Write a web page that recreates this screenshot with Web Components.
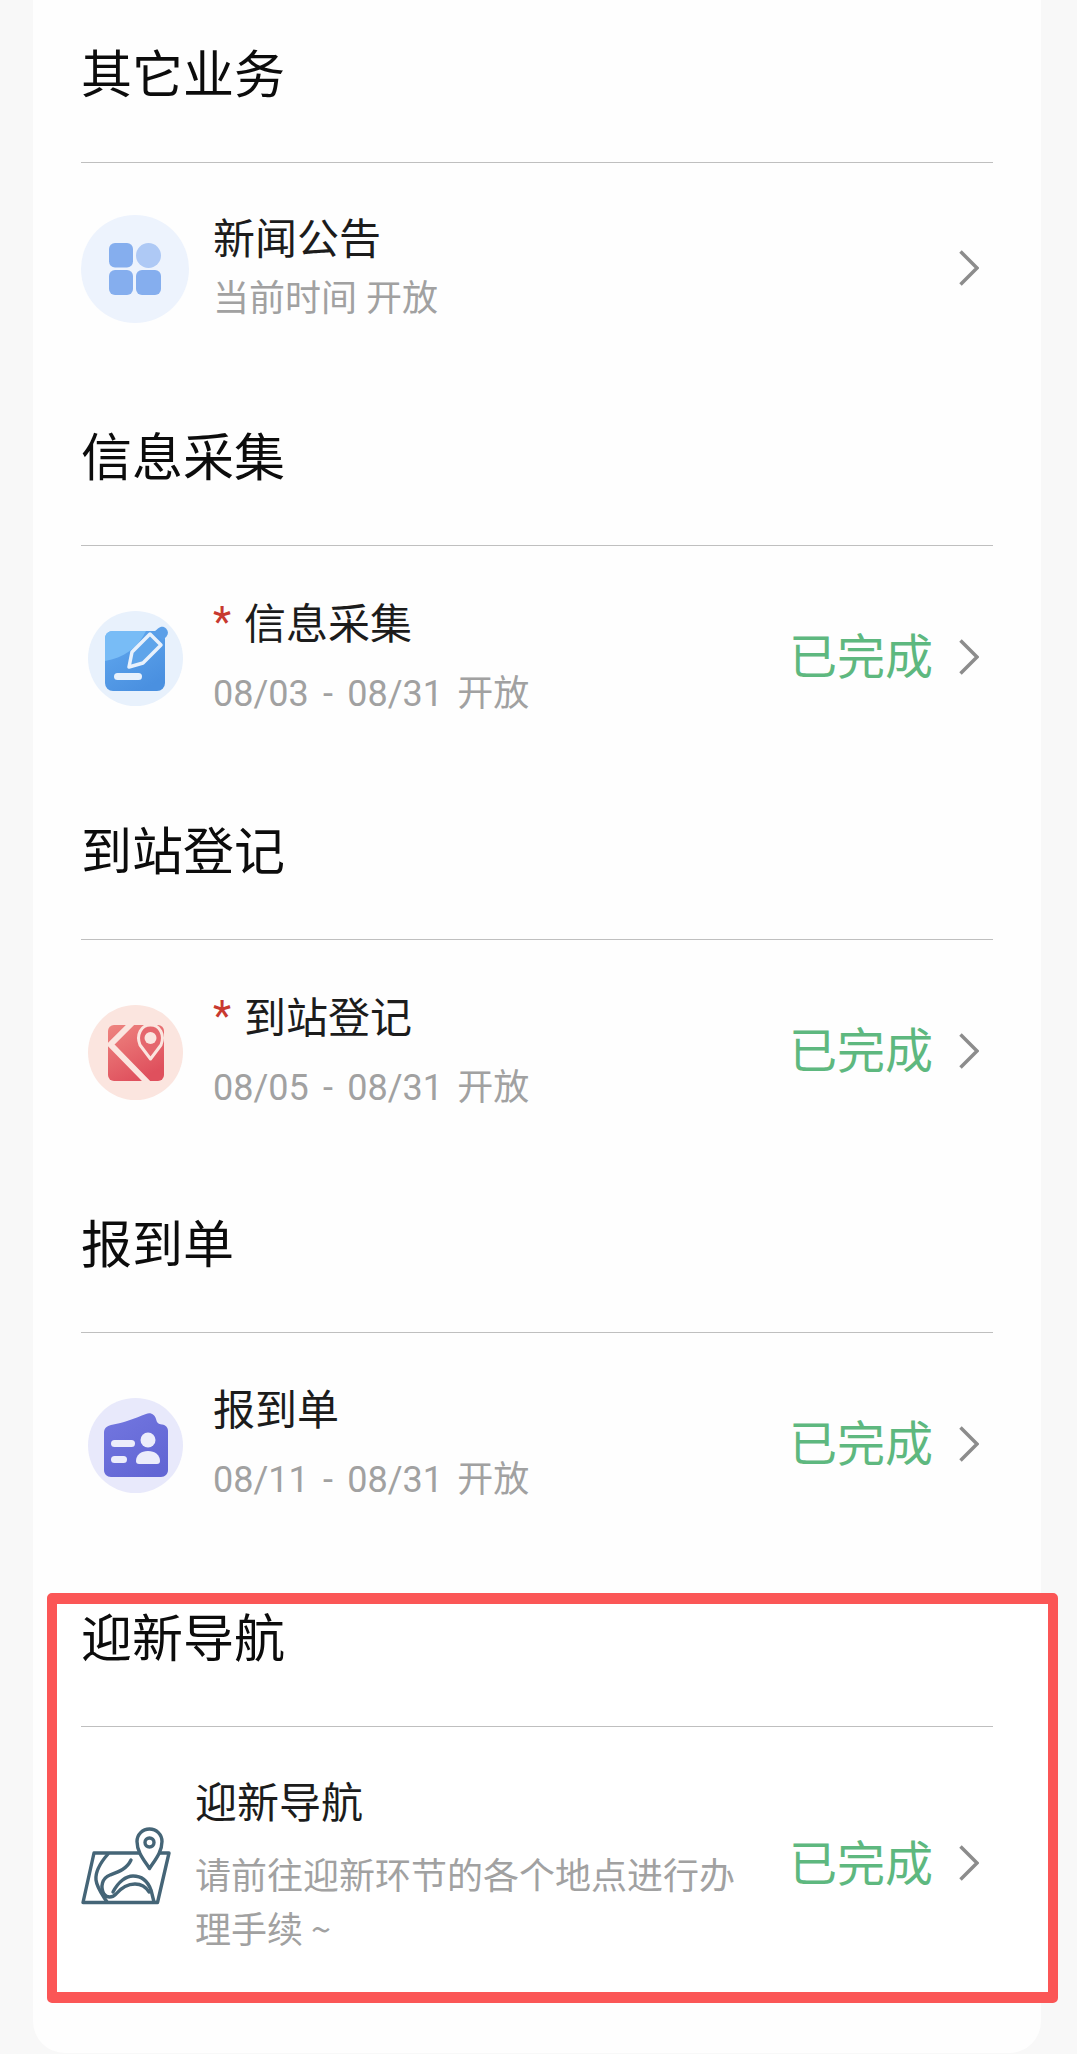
<!DOCTYPE html>
<html lang="zh">
<head>
<meta charset="utf-8">
<title>迎新</title>
<style>
  html, body { margin: 0; background: #f8f8f8; }
  body { font-family: Roboto, "Noto Sans CJK SC", sans-serif; height: 2054px; overflow: hidden; }
</style>
</head>
<body>
<task-card>
  <task-section heading="其它业务" style="--after: 51px">
    <task-item tight style="--item-h: 212px">
      <icon-badge slot="icon" size="108" color="#edf3fd">
        <svg viewBox="0 0 108 108" width="108" height="108">
          <rect x="28" y="28" width="24" height="24.5" rx="6" fill="#85aeee"/>
          <circle cx="67.5" cy="40.5" r="12.5" fill="#aec9f5"/>
          <rect x="28" y="55" width="24" height="25" rx="6" fill="#85aeee"/>
          <rect x="55" y="55" width="25" height="25" rx="6" fill="#85aeee"/>
        </svg>
      </icon-badge>
      <span slot="title">新闻公告</span>
      <span slot="sub">当前时间 开放</span>
    </task-item>
  </task-section>

  <task-section heading="信息采集" style="--after: 50px">
    <task-item required dated status="已完成">
      <icon-badge slot="icon" size="95" color="#e8f1fc">
        <svg viewBox="0 0 95 95" width="95" height="95">
          <defs>
            <linearGradient id="pen" x1="0" y1="0" x2="0.6" y2="1">
              <stop offset="0" stop-color="#62a9ef"/>
              <stop offset="1" stop-color="#4a90e0"/>
            </linearGradient>
          </defs>
          <rect x="17" y="20" width="60" height="60" rx="8" fill="url(#pen)"/>
          <path d="M17 50C35 47 50 37 58 20H25Q17 20 17 28Z" fill="#78bcf6"/>
          <rect x="26" y="62" width="28" height="7" rx="3.5" fill="#e8f1fc"/>
          <path d="M41 56L44 41L62 23L73 34L55 52Z" fill="#5ea4ea" stroke="#e8f1fc" stroke-width="3.5" stroke-linejoin="round"/>
          <path d="M66 21L70 17.5C73 15 76 15.500 78 17.500C80.500 20 80.500 23 78.500 25.500L74.500 29.500Z" fill="#5b9fe8"/>
        </svg>
      </icon-badge>
      <span slot="title">信息采集</span>
      <span slot="sub">08/03 - 08/31 开放</span>
    </task-item>
  </task-section>

  <task-section heading="到站登记" style="--after: 49px">
    <task-item required dated status="已完成">
      <icon-badge slot="icon" size="95" color="#fbe5df">
        <svg viewBox="0 0 95 95" width="95" height="95">
          <defs>
            <linearGradient id="map" x1="0" y1="0" x2="0.5" y2="1">
              <stop offset="0" stop-color="#ee8580"/>
              <stop offset="1" stop-color="#df505d"/>
            </linearGradient>
          </defs>
          <rect x="20" y="20" width="56" height="56" rx="6" fill="url(#map)"/>
          <path d="M44 18L22.500 39.500L60 78" stroke="#fbe5df" stroke-width="6" fill="none"/>
          <path d="M62.500 54L52 40C48 30 53 20 62.500 20C72 20 77 30 73 40Z" fill="#e5676d" stroke="#fbe5df" stroke-width="3" stroke-linejoin="round"/>
          <circle cx="62.500" cy="33" r="6" fill="#fbe5df"/>
        </svg>
      </icon-badge>
      <span slot="title">到站登记</span>
      <span slot="sub">08/05 - 08/31 开放</span>
    </task-item>
  </task-section>

  <task-section heading="报到单" style="--after: 36px">
    <task-item dated status="已完成">
      <icon-badge slot="icon" size="95" color="#e8e9fb">
        <svg viewBox="0 0 95 95" width="95" height="95">
          <defs>
            <linearGradient id="card" x1="0" y1="0" x2="0.7" y2="1">
              <stop offset="0" stop-color="#7377e0"/>
              <stop offset="1" stop-color="#6266d4"/>
            </linearGradient>
          </defs>
          <path d="M16 35C16 30 19 28 23 27C36 25 47 20 58 16C63 14 67 17 68 21C69 25 70 26 74 26.500C78 27 80 30 80 33V72C80 76 77 79 73 79H23C19 79 16 76 16 72Z" fill="url(#card)"/>
          <rect x="23" y="42" width="24" height="7" rx="3.500" fill="#ecedfb"/>
          <rect x="23" y="58" width="16" height="7" rx="3.500" fill="#ecedfb"/>
          <circle cx="60" cy="42" r="7.500" fill="#ecedfb"/>
          <path d="M48 63C48 57 53 53 60 53C67 53 72 57 72 63C72 65 71 66 69 66H51C49 66 48 65 48 63Z" fill="#ecedfb"/>
        </svg>
      </icon-badge>
      <span slot="title">报到单</span>
      <span slot="sub">08/11 - 08/31 开放</span>
    </task-item>
  </task-section>

  <red-frame>
    <task-section heading="迎新导航" style="--after: 0px">
      <task-item status="已完成" long style="--item-h: 265px; --icon-w: 90px; --icon-gap: 24px">
        <svg slot="icon" viewBox="21 27 90 78" width="90" height="78" style="margin-top: 4px; overflow: visible" fill="none" stroke="#456577" stroke-width="3.400" stroke-linejoin="round" stroke-linecap="round">
          <path d="M34 53H109L97.500 102.500H23Z"/>
          <path d="M48 54C41 62 35 71 36 80C37 88 42 94 47 102"/>
          <path d="M71 60C67 69 58 72 50 75C42 78 40 87 44 94C47 98 52 98 56 94C62 87 68 84 75 84C81 84 86 87 89 92"/>
          <path d="M53 92C58 82 66 76 73 76C82 76 88 82 91 90L94 102"/>
          <path d="M89.500 68.500C84 60 77 52 77 41.500C77 34.500 82.500 29 89.500 29C96.500 29 102 34.500 102 41.500C102 52 95 60 89.500 68.500Z" fill="#fff"/>
          <circle cx="89.500" cy="42.500" r="4.500"/>
        </svg>
        <span slot="title">迎新导航</span>
        <span slot="sub">请前往迎新环节的各个地点进行办理手续 ~</span>
      </task-item>
    </task-section>
  </red-frame>
</task-card>

<script>
class TaskCard extends HTMLElement {
  constructor() {
    super();
    this.attachShadow({ mode: 'open' });
    this.shadowRoot.innerHTML = `<style>
        :host {
          display: block;
          box-sizing: border-box;
          width: 1008px;
          height: 2053px;
          margin-left: 33px;
          padding: 43px 48px 0;
          background: #fefefe;
          border-radius: 0 0 32px 32px;
        }
      </style>
      <slot></slot>`;
  }
}

class TaskSection extends HTMLElement {
  constructor() {
    super();
    this.attachShadow({ mode: 'open' });
    this.shadowRoot.innerHTML = `<style>
        :host { display: block; padding-bottom: var(--after, 49px); }
        h2 {
          margin: 0;
          padding: 3px 0 56px;
          font-size: 51px;
          font-weight: 400;
          line-height: 60px;
          color: #0c0c0c;
          border-bottom: 1px solid #bfbfbf;
        }
      </style>
      <h2></h2>
      <slot></slot>`;
  }

  connectedCallback() {
    this.shadowRoot.querySelector('h2').textContent = this.getAttribute('heading');
  }
}

class TaskItem extends HTMLElement {
  constructor() {
    super();
    this.attachShadow({ mode: 'open' });
    this.shadowRoot.innerHTML = `<style>
        :host {
          display: flex;
          align-items: center;
          box-sizing: border-box;
          height: var(--item-h, 224px);
        }
        :host([long]) { padding-top: 9px; }
        .icon {
          flex: none;
          display: flex;
          justify-content: center;
          width: var(--icon-w, 108px);
          margin-right: var(--icon-gap, 24px);
        }
        .text { flex: 1; min-width: 0; padding-right: 36px; }
        :host([long]) .text { padding-top: 5px; }
        .title { font-size: 42px; line-height: 50px; color: #1c1c1c; }
        .star { color: #c8392f; margin-right: 13px; vertical-align: 3px; display: none; }
        :host([required]) .star { display: inline; }
        .sub {
          margin-top: 19px;
          font-size: 36px;
          line-height: 50px;
          color: #a1a1a1;
        }
        :host([dated]) .sub { word-spacing: 5.3px; }
        :host([tight]) .sub { margin-top: 9px; }
        :host([long]) .sub {
          margin-top: 17px;
          line-height: 54px;
          font-family: "Noto Sans CJK SC", sans-serif;
        }
        .status { flex: none; font-size: 48px; color: #5eb87f; margin: 0 26px 10px 0; }
        :host([long]) .status { margin-bottom: 8px; }
        .arrow { flex: none; margin: 0 14px 2px 0; }
      </style>
      <div class="icon"><slot name="icon"></slot></div>
      <div class="text">
        <div class="title"><span class="star">*</span><slot name="title"></slot></div>
        <div class="sub"><slot name="sub"></slot></div>
      </div>
      <div class="status"></div>
      <svg class="arrow" viewBox="0 0 20 36" width="20" height="36" fill="none" stroke="#8c8c8c" stroke-width="3.500"><path d="M1.500 1.500L18 18L1.500 34.500"/></svg>`;
  }

  connectedCallback() {
    this.shadowRoot.querySelector('.status').textContent = this.getAttribute('status') || '';
  }
}

class IconBadge extends HTMLElement {
  constructor() {
    super();
    this.attachShadow({ mode: 'open' });
    this.shadowRoot.innerHTML = `<style>
        :host { display: block; border-radius: 50%; line-height: 0; }
      </style>
      <slot></slot>`;
  }

  connectedCallback() {
    const size = this.getAttribute('size') + 'px';
    this.style.width = size;
    this.style.height = size;
    this.style.background = this.getAttribute('color');
  }
}

class RedFrame extends HTMLElement {
  constructor() {
    super();
    this.attachShadow({ mode: 'open' });
    this.shadowRoot.innerHTML = `<style>
        :host {
          display: block;
          margin: 0 -65px 0 -34px;
          padding: 3px 55px 0 24px;
          background: #fff;
          border: solid #fb5656;
          border-width: 11px 10px;
          border-radius: 5px;
        }
      </style>
      <slot></slot>`;
  }
}

customElements.define('task-card', TaskCard);
customElements.define('task-section', TaskSection);
customElements.define('task-item', TaskItem);
customElements.define('icon-badge', IconBadge);
customElements.define('red-frame', RedFrame);
</script>
</body>
</html>
